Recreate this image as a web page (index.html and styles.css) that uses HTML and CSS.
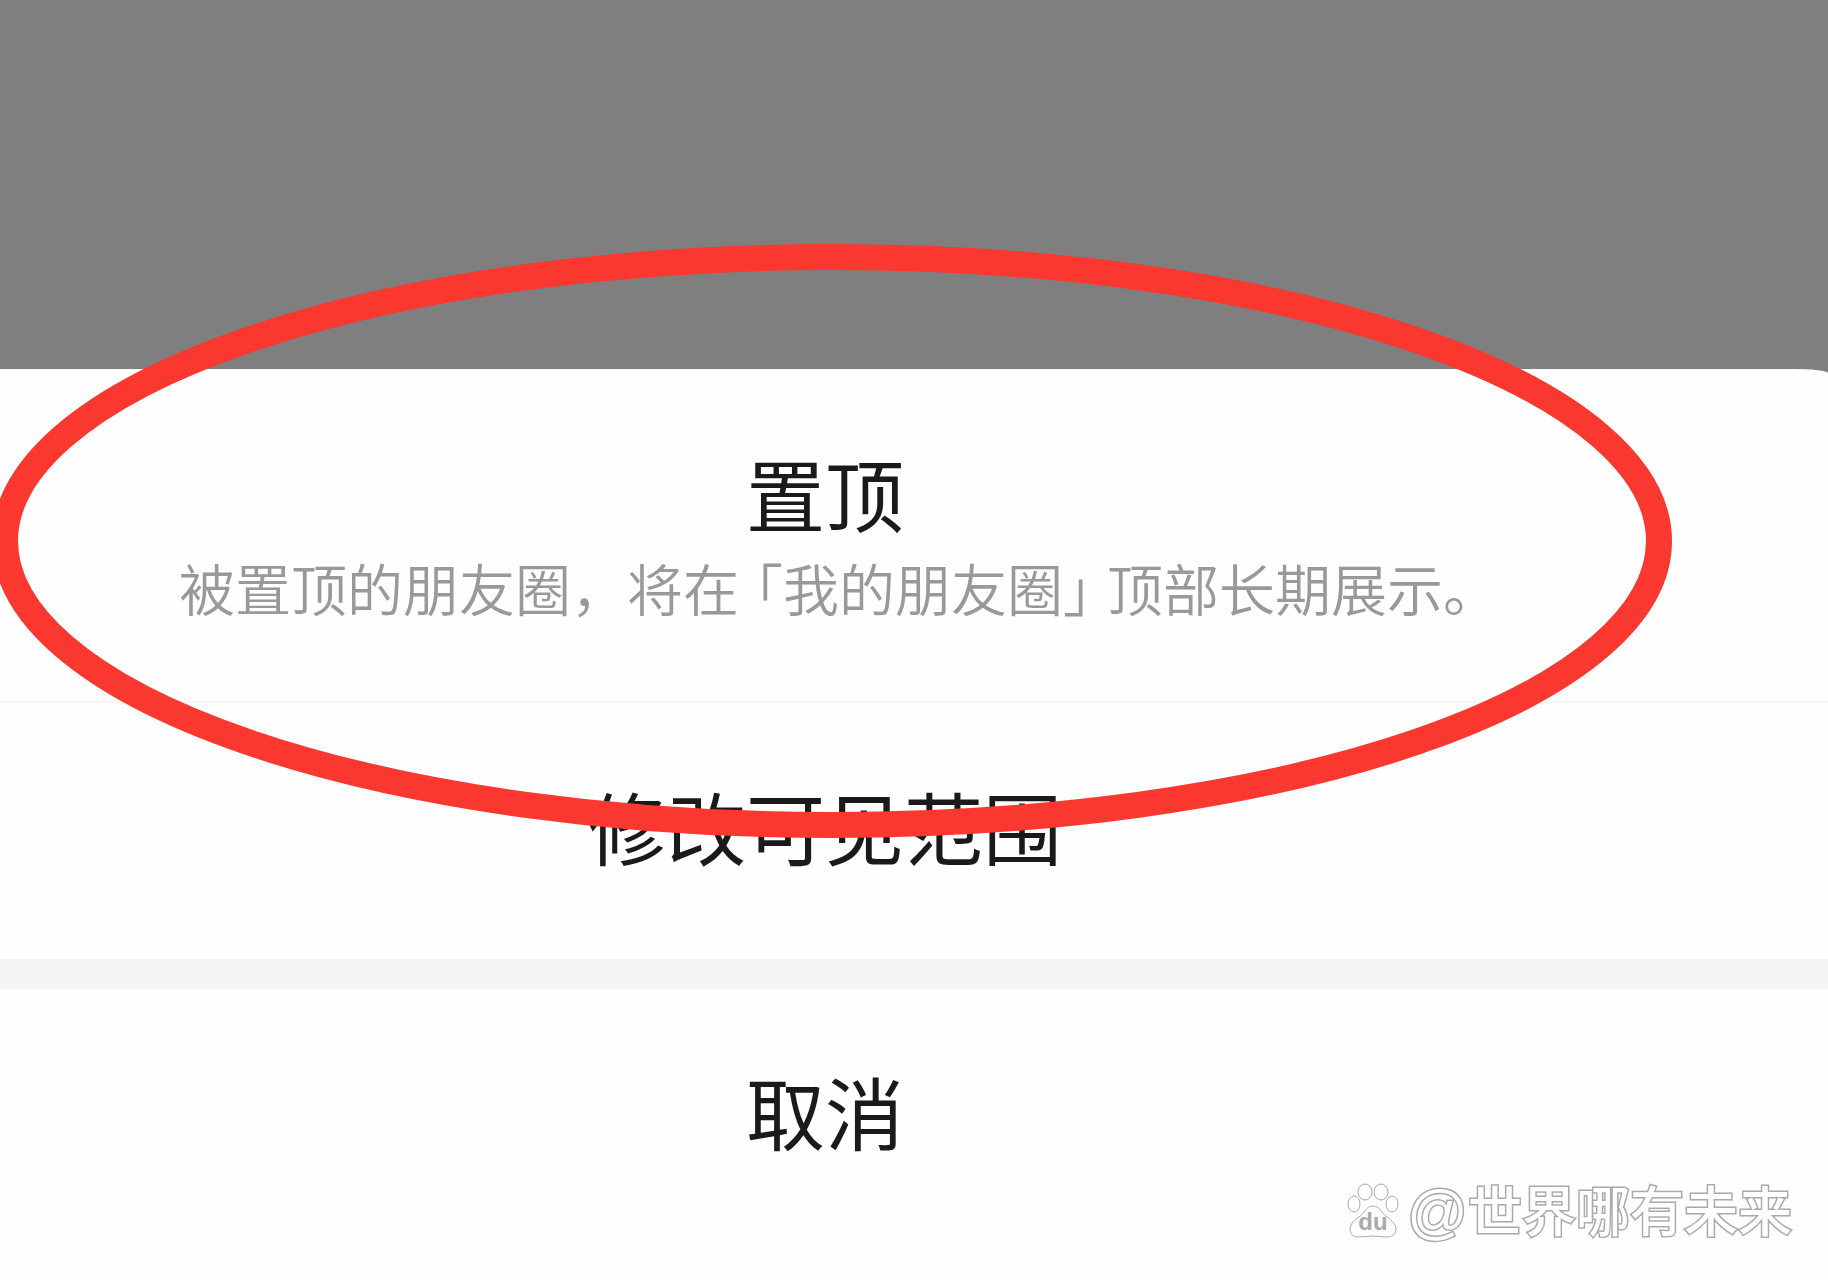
FILE: index.html
```
<!DOCTYPE html>
<html lang="zh-CN">
<head>
    <meta charset="UTF-8">
    <title>朋友圈</title>
    <link rel="stylesheet" href="styles.css">
</head>
<body>
    <div class="screen">
        <div class="backdrop"></div>
        <div class="sheet">
            <button type="button" class="item item-top">
                <span class="label">置顶</span>
                <span class="hint">被置顶的朋友圈，将在<span class="half open">「</span>我的朋友圈<span class="half close">」</span>顶部长期展示<span class="half">。</span></span>
            </button>
            <button type="button" class="item item-range">
                <span class="label">修改可见范围</span>
            </button>
            <button type="button" class="item item-cancel">
                <span class="label">取消</span>
            </button>
        </div>
        <svg class="circle" viewBox="0 0 1828 1280" aria-hidden="true">
            <ellipse cx="832" cy="541" rx="827" ry="284"/>
        </svg>
        <div class="watermark">
            <svg class="paw" viewBox="0 0 52 56" aria-hidden="true">
                <ellipse cx="18" cy="9" rx="7" ry="8"/>
                <ellipse cx="34" cy="9" rx="7" ry="8"/>
                <ellipse cx="7" cy="21" rx="6" ry="8"/>
                <ellipse cx="45" cy="21" rx="6" ry="8"/>
                <path d="M26 23c-4 0-6 2-8 5-5 7-15 10-15 18 0 6 4 8 9 8 5 0 9-1 14-1s9 1 14 1c5 0 9-2 9-8 0-8-10-11-15-18-2-3-4-5-8-5z"/>
                <text x="26" y="47" text-anchor="middle">du</text>
            </svg>
            <span class="author"><span class="at">@</span>世界哪有未来</span>
        </div>
    </div>
</body>
</html>
```

FILE: styles.css
```
body {
    margin: 0;
    background-color: #fefefe;
    font-family: "Noto Sans CJK SC", sans-serif;
}
.screen {
    position: relative;
    display: flex;
    flex-direction: column;
    min-height: 100vh;
    overflow: hidden;
    background-color: #7f7f7f;
}
.backdrop {
    height: 369px;
}
.sheet {
    flex: 1;
    display: flex;
    flex-direction: column;
    background-color: #fefefe;
    border-top-right-radius: 36px 4px;
    overflow: hidden;
}
.item {
    display: flex;
    flex-direction: column;
    align-items: center;
    justify-content: center;
    gap: 12px;
    box-sizing: border-box;
    min-height: 256px;
    padding: 0 178px 10px 0;
    border: none;
    background: none;
    color: #1a1a1a;
    font-family: inherit;
    cursor: pointer;
}
.item-top {
    min-height: 334px;
    padding-bottom: 4px;
    border-bottom: 2px solid #f8f8f8;
}
.item-cancel {
    min-height: 284px;
    border-top: 30px solid #f5f5f5;
}
.label {
    font-size: 79px;
    line-height: 96px;
}
.hint {
    font-size: 56px;
    line-height: 68px;
    font-weight: 350;
    color: #999;
    white-space: nowrap;
}
.half {
    font-feature-settings: "halt";
}
.open {
    margin-left: 16px;
}
.close {
    margin-right: 16px;
}
.circle {
    position: absolute;
    top: 0;
    left: 0;
    width: 100%;
    pointer-events: none;
}
.circle ellipse {
    fill: none;
    stroke: #fa3830;
    stroke-width: 26px;
}
.watermark {
    position: absolute;
    right: 36px;
    bottom: 32px;
    display: flex;
    align-items: center;
    gap: 8px;
}
.author {
    color: #fff;
    font-size: 54px;
    line-height: 72px;
    font-weight: 500;
    -webkit-text-stroke: 3px #aaa;
    paint-order: stroke fill;
}
.at {
    font-family: "Liberation Sans", sans-serif;
    font-size: 60px;
}
.paw {
    width: 52px;
    height: 56px;
    overflow: visible;
    fill: #fff;
    stroke: #aaa;
    stroke-width: 1px;
}
.paw text {
    fill: #aaa;
    stroke: none;
    font-family: "Liberation Sans", sans-serif;
    font-size: 24px;
    font-weight: bold;
}
```
